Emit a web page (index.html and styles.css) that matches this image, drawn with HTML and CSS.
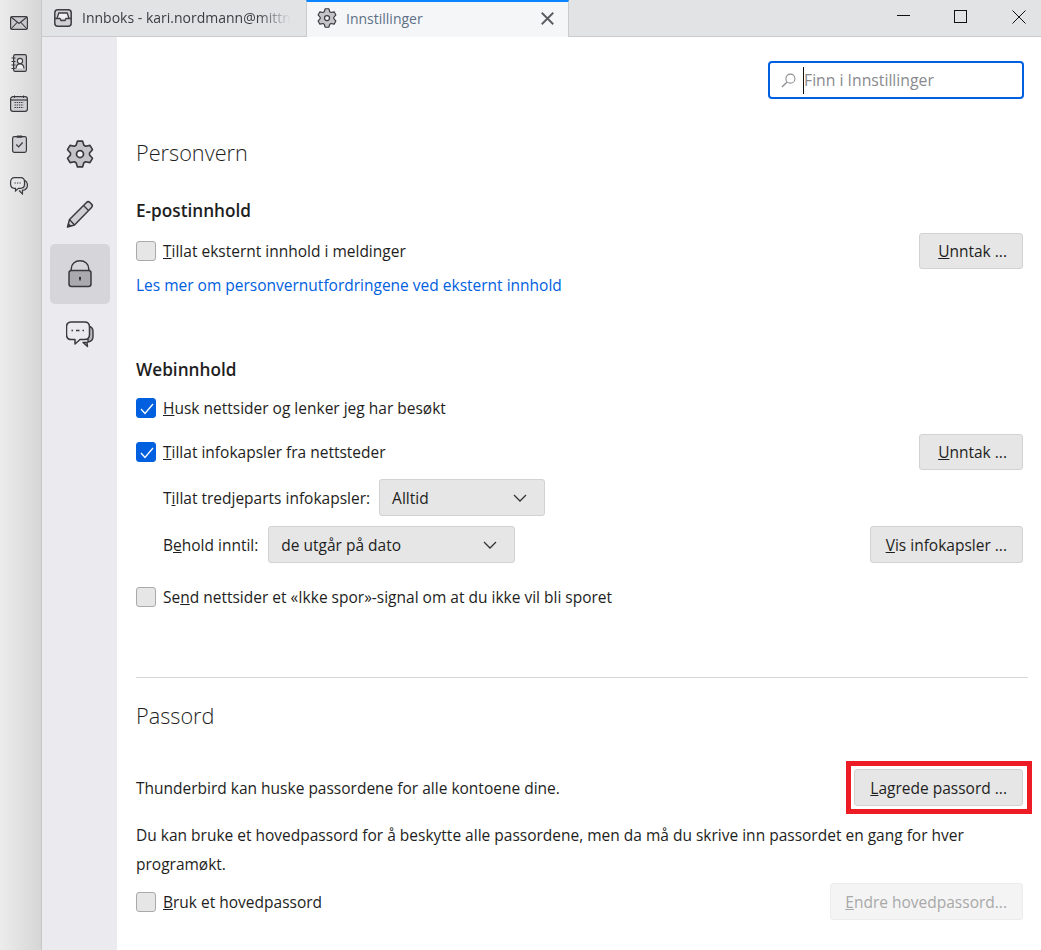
FILE: index.html
```html
<!DOCTYPE html>
<html lang="nb">
<head>
<meta charset="utf-8">
<title>Innstillinger</title>
<link rel="stylesheet" href="styles.css">
</head>
<body>
<div class="app">
  <aside class="spaces">
    <svg class="space-icon i1" viewBox="0 0 18 14"><rect x="0.6" y="0.6" width="16.8" height="12.8" rx="1.5" fill="#c9c9cc" stroke="#3a3a3e" stroke-width="1.2"/><path d="M1 1l8 6.5L17 1M1 13l6-6.5M17 13l-6-6.5" fill="none" stroke="#3a3a3e" stroke-width="1.1"/></svg>
    <svg class="space-icon i2" viewBox="0 0 16 18"><rect x="2.6" y="0.6" width="12.8" height="16.8" rx="1.6" fill="#c9c9cc" stroke="#3a3a3e" stroke-width="1.2"/><path d="M0.5 4h4M0.5 7.5h4M0.5 11h4M0.5 14.5h4" stroke="#3a3a3e" stroke-width="1.2"/><circle cx="9" cy="7" r="2.6" fill="#eee" stroke="#3a3a3e" stroke-width="1.1"/><path d="M5 14.5c.3-3 1.8-4.6 4-4.6s3.700 1.600 4 4.600" fill="#eee" stroke="#3a3a3e" stroke-width="1.1"/></svg>
    <svg class="space-icon i3" viewBox="0 0 18 17"><rect x="0.6" y="1.600" width="16.800" height="14.800" rx="2.400" fill="#d2d2d5" stroke="#3a3a3e" stroke-width="1.200"/><path d="M1 5h16" stroke="#3a3a3e" stroke-width="1.200"/><path d="M4.500 0.500v2.500M13.500 0.500v2.500" stroke="#3a3a3e" stroke-width="1"/><path d="M4.500 7.500h9M4.500 10h9M4.500 12.500h9" stroke="#3a3a3e" stroke-width="1.200" stroke-dasharray="1.400 0.800"/></svg>
    <svg class="space-icon i4" viewBox="0 0 15 18"><rect x="0.600" y="1.600" width="13.800" height="15.800" rx="1.800" fill="#d2d2d5" stroke="#3a3a3e" stroke-width="1.200"/><rect x="4.500" y="0.600" width="6" height="2.200" rx="1" fill="#3a3a3e"/><path d="M4.300 9.500l2.300 2.300 4-4.300" fill="none" stroke="#3a3a3e" stroke-width="1.200"/></svg>
    <svg class="space-icon i5" viewBox="0 0 18 18"><path d="M12.500 12.500v4.500l-3.500-3.500" fill="#c9c9cc" stroke="#3a3a3e" stroke-width="1.100"/><path d="M15 3.500c1.600 1 2.500 2.500 2.500 4.500 0 3-1.800 5-5 5.500" fill="#c9c9cc" stroke="#3a3a3e" stroke-width="1.100"/><path d="M4.500 0.700h6c2.400 0 4 1.700 4 4v2.600c0 2.300-1.600 4-4 4H8.500L5.500 14v-2.700h-1c-2.400 0-3.900-1.700-3.900-4V4.700c0-2.300 1.500-4 3.900-4z" fill="#e6e6e8" stroke="#3a3a3e" stroke-width="1.200"/><path d="M4.500 6h1.300M7 6h1.300M9.500 6h1.300" stroke="#3a3a3e" stroke-width="1.200"/></svg>
  </aside>
  <div class="window">
    <header class="tabbar">
      <div class="tab">
        <svg class="tab-icon" viewBox="0 0 18 18"><rect x="0.800" y="0.800" width="16.400" height="16.400" rx="3" fill="#d0d0d4" stroke="#3d3d42" stroke-width="1.500"/><path d="M3 9.500l1.800-5.500h8.400L15 9.500" fill="#f2f2f4" stroke="#3d3d42" stroke-width="1.300"/><path d="M1 9.500h5l1 2h4l1-2h5" fill="none" stroke="#3d3d42" stroke-width="1.300"/></svg>
        <span class="tab-title fade">Innboks - kari.nordmann@mittn</span>
      </div>
      <div class="tab active">
        <svg class="tab-icon" viewBox="0 0 24 24"><use href="#gear"/></svg>
        <span class="tab-title blue">Innstillinger</span>
        <svg class="tab-close" viewBox="0 0 12 12"><path d="M0.700 0.700l10.600 10.600M11.300 0.700L0.700 11.300" stroke="#5a5b60" stroke-width="1.700"/></svg>
      </div>
      <div class="win-controls">
        <svg class="win-btn" viewBox="0 0 14 14"><path d="M1 5.500h13" stroke="#111" stroke-width="1"/></svg>
        <svg class="win-btn" viewBox="0 0 14 14"><rect x="0.500" y="0.500" width="12" height="12" fill="none" stroke="#111"/></svg>
        <svg class="win-btn" viewBox="0 0 14 14"><path d="M0.500 0.500l13 13M13.500 0.500l-13 13" stroke="#111" stroke-width="1"/></svg>
      </div>
    </header>
    <div class="body">
      <nav class="nav">
        <a class="nav-item"><svg class="nav-icon" viewBox="0 0 24 24"><use href="#gear"/></svg></a>
        <a class="nav-item"><svg class="nav-icon" viewBox="0 0 28 28"><path d="M1.500 27l2-7.500L20.500 2.500c1-1 2.400-1 3.400 0l1.600 1.600c1 1 1 2.400 0 3.400L8.500 25z" fill="#d0d0d4" stroke="#3a3a3e" stroke-width="1.500" stroke-linejoin="round"/><path d="M1.500 27l1-3.900 2.900 2.900z" fill="#3a3a3e"/><path d="M3.500 19.500l5 5.500M17.500 5.500l5 5" stroke="#3a3a3e" stroke-width="1.300"/></svg></a>
        <a class="nav-item selected"><svg class="nav-icon" viewBox="0 0 28 28"><path d="M5.200 11V9C5.200 4 9 .8 14 .8S22.800 4 22.800 9v2" fill="none" stroke="#3a3a3e" stroke-width="1.500"/><rect x="3" y="10.500" width="22" height="16" rx="2.500" fill="#a9a9ae" stroke="#3a3a3e" stroke-width="1.500"/><rect x="13.300" y="17.500" width="1.400" height="3" fill="#222"/><circle cx="14" cy="17.800" r="1" fill="#222"/></svg></a>
        <a class="nav-item"><svg class="nav-icon" viewBox="0 0 28 28"><path d="M21 22.500l.5 4-4.500-4zM22 6c3 .5 5 2.500 5 5.500v5c0 3-1.800 5-5 5.500z" fill="#b9b9bd" stroke="#3a3a3e" stroke-width="1.400" stroke-linejoin="round"/><path d="M5.500 2h13c3 0 5 2 5 5v7.500c0 3-2 5-5 5H14l-5 4.500v-4.500H5.500c-3 0-5-2-5-5V7c0-3 2-5 5-5z" fill="#ebebef" stroke="#3a3a3e" stroke-width="1.500" stroke-linejoin="round"/><path d="M5.500 10.500h1.500M10 10.500h3.500M16.500 10.500h1.500" stroke="#3a3a3e" stroke-width="1.300"/></svg></a>
      </nav>
      <main class="main">
        <div class="search-row">
          <div class="search">
            <svg class="search-icon" viewBox="0 0 16 16"><circle cx="10" cy="6" r="4.800" fill="none" stroke="#8f8f94" stroke-width="1.200"/><path d="M6.500 9.500L1 15" stroke="#8f8f94" stroke-width="1.500"/></svg>
            <span class="caret"></span>
            <span class="placeholder">Finn i Innstillinger</span>
          </div>
        </div>

        <h1 class="page-title">Personvern</h1>
        <h2 class="group-title first">E-postinnhold</h2>
        <div class="row r-email">
          <label class="check"><span class="box"></span><span><u>T</u>illat eksternt innhold i meldinger</span></label>
          <button class="btn w-unntak"><u>U</u>nntak ...</button>
        </div>
        <a class="link">Les mer om personvernutfordringene ved eksternt innhold</a>

        <h2 class="group-title web">Webinnhold</h2>
        <div class="row r-husk">
          <label class="check"><span class="box on"><svg viewBox="0 0 18 18"><path d="M4 10l4 4.500L16 5" fill="none" stroke="#fff" stroke-width="1.300"/></svg></span><span><u>H</u>usk nettsider og lenker jeg har besøkt</span></label>
        </div>
        <div class="row r-cookies">
          <label class="check"><span class="box on"><svg viewBox="0 0 18 18"><path d="M4 10l4 4.500L16 5" fill="none" stroke="#fff" stroke-width="1.300"/></svg></span><span><u>T</u>illat infokapsler fra nettsteder</span></label>
          <button class="btn w-unntak"><u>U</u>nntak ...</button>
        </div>
        <div class="row r-third">
          <div class="field indent"><span>T<u>i</u>llat tredjeparts infokapsler:</span>
            <div class="select s-third"><span>Alltid</span><svg class="chev" viewBox="0 0 14 8"><path d="M1 1l6 6 6-6" fill="none" stroke="#333" stroke-width="1.300"/></svg></div>
          </div>
        </div>
        <div class="row r-keep">
          <div class="field indent"><span>B<u>e</u>hold inntil:</span>
            <div class="select s-keep"><span>de utgår på dato</span><svg class="chev" viewBox="0 0 14 8"><path d="M1 1l6 6 6-6" fill="none" stroke="#333" stroke-width="1.300"/></svg></div>
          </div>
          <button class="btn"><u>V</u>is infokapsler ...</button>
        </div>
        <div class="row r-track">
          <label class="check"><span class="box"></span><span>Se<u>n</u>d nettsider et «Ikke spor»-signal om at du ikke vil bli sporet</span></label>
        </div>

        <hr class="rule">
        <h1 class="page-title pw">Passord</h1>
        <div class="row r-saved">
          <span>Thunderbird kan huske passordene for alle kontoene dine.</span>
          <button class="btn marked"><u>L</u>agrede passord ...</button>
        </div>
        <p class="para">Du kan bruke et hovedpassord for å beskytte alle passordene, men da må du skrive inn passordet en gang for hver programøkt.</p>
        <div class="row r-master">
          <label class="check"><span class="box"></span><span><u>B</u>ruk et hovedpassord</span></label>
          <button class="btn disabled" disabled><u>E</u>ndre hovedpassord...</button>
        </div>
      </main>
    </div>
  </div>
</div>
<svg class="defs" width="0" height="0">
  <defs>
    <symbol id="gear" viewBox="0 0 24 24">
      <path d="M9.840 .91H14.160L15.340 4.510L16.820 5.370L20.530 4.590L22.690 8.320L20.160 11.140V12.860L22.690 15.680L20.530 19.410L16.820 18.630L15.340 19.490L14.160 23.090H9.840L8.660 19.490L7.180 18.630L3.470 19.410L1.310 15.680L3.840 12.860V11.140L1.310 8.320L3.470 4.590L7.180 5.370L8.660 4.510Z" fill="#c4c4c8" stroke="#3a3a3e" stroke-width="1.400" stroke-linejoin="round"/>
      <circle cx="12" cy="12" r="3" fill="#f5f5f7" stroke="#3a3a3e" stroke-width="1.500"/>
    </symbol>
  </defs>
</svg>
</body>
</html>
```
FILE: styles.css
```css
* { box-sizing: border-box; }
html, body { margin: 0; padding: 0; height: 100%; overflow: hidden; }
body { font-family: "Open Sans", "Noto Sans", sans-serif; font-size: 15.5px; color: #1e1e22; background: #fff; }
.defs { position: absolute; }
.app { display: flex; width: 1041px; height: 950px; }

.spaces { width: 42px; flex: none; background: linear-gradient(90deg, #ececec, #d6d6d6); border-right: 1px solid #c8c8c8; display: flex; flex-direction: column; align-items: center; padding: 16px 3px 0 0; }
.space-icon { display: block; }
.i1 { width: 18px; height: 14px; }
.i2 { width: 16px; height: 18px; margin-top: 24px; }
.i3 { width: 18px; height: 17px; margin-top: 23px; }
.i4 { width: 15px; height: 18px; margin-top: 23px; }
.i5 { width: 18px; height: 18px; margin-top: 24px; }

.window { flex: 1; display: flex; flex-direction: column; min-width: 0; }
.tabbar { height: 37px; flex: none; display: flex; background: #e2e3e5; border-bottom: 1px solid #cbcbcb; }
.tab { display: flex; align-items: center; height: 37px; width: 264px; padding: 0 0 2px 12px; flex: none; font-size: 14px; color: #3c3c42; }
.tab-icon { width: 18px; height: 18px; flex: none; }
.tab-title { margin-left: 10px; white-space: nowrap; }
.fade { -webkit-mask-image: linear-gradient(90deg, #000 84%, transparent); mask-image: linear-gradient(90deg, #000 84%, transparent); }
.tab.active { width: 263px; background: #f5f6f8; border: 1px solid #cbcbcb; border-top: 2px solid #0a84ff; border-bottom: 0; padding: 0 0 3px 10px; }
.tab.active .tab-icon { width: 20px; height: 20px; }
.tab.active .tab-title { margin-left: 9px; }
.blue { color: #5d7087; flex: 1; }
.tab-close { width: 13px; height: 13px; margin-right: 14px; flex: none; }
.win-controls { margin-left: auto; display: flex; gap: 44px; padding: 10px 15px 0 0; }
.win-btn { width: 14px; height: 14px; display: block; }

.body { flex: 1; display: flex; min-height: 0; }
.nav { width: 75px; flex: none; background: #ebebef; padding: 87px 0 0 8px; }
.nav-item { display: flex; align-items: center; justify-content: center; width: 60px; height: 60px; border-radius: 5px; }
.nav-item.selected { background: #d6d6da; }
.nav-icon { width: 28px; height: 28px; display: block; }

.main { flex: 1; min-width: 0; padding: 0 18px 0 19px; }
.search-row { display: flex; justify-content: flex-end; padding-top: 24px; }
.search { width: 256px; height: 38px; margin-right: -1px; border: 2px solid #0060df; border-radius: 4px; display: flex; align-items: center; padding-left: 11px; }
.search-icon { width: 15px; height: 15px; flex: none; }
.caret { width: 1px; height: 27px; background: #111; margin-left: 7px; flex: none; }
.placeholder { font-size: 15.75px; color: #8a8a8e; }

.page-title { font-size: 21.7px; font-weight: 300; line-height: 36px; margin: 36px 0 0; color: #1e1e22; }
.page-title.pw { margin-top: 20px; }
.group-title { font-size: 17.2px; font-weight: 600; line-height: 24px; margin: 0; }
.group-title.first { margin-top: 28px; }
.group-title.web { margin-top: 61px; }

.row { display: flex; align-items: center; justify-content: space-between; }
.r-email { margin-top: 10px; height: 36px; }
.r-husk { margin-top: 12px; height: 28px; }
.r-cookies { margin-top: 12px; height: 36px; }
.r-third { margin-top: 9px; height: 37px; }
.r-keep { margin-top: 10px; height: 37px; }
.r-track { margin-top: 20px; height: 28px; }
.r-saved { margin-top: 35px; height: 37px; }
.r-master { margin-top: 4px; height: 37px; }

.check { display: flex; align-items: center; gap: 7px; }
.box { width: 20px; height: 20px; flex: none; border: 1px solid #aaaaae; border-radius: 3px; background: #e6e6e6; display: block; }
.box.on { background: #0060df; border-color: #0060df; }
.box svg { display: block; width: 18px; height: 18px; }

.btn { font: inherit; color: inherit; height: 36px; padding: 0 15px 0 15px; background: #e6e6e6; border: 1px solid #d2d2d2; border-radius: 3px; position: relative; white-space: nowrap; text-align: right; }
.w-unntak { min-width: 104px; }
.btn.marked::after { content: ""; position: absolute; inset: -9px -10px -9px -9px; border: 5px solid #ed1c24; }
.btn.disabled { background: #f4f4f4; border-color: #ececec; color: #a8a8a8; padding-left: 14px; }
.r-saved .btn, .r-master .btn, .r-keep .btn { height: 37px; }

.link { display: block; color: #0060df; line-height: 24px; margin-top: 4px; }
.indent { padding-left: 27px; }
.field { display: flex; align-items: center; gap: 9px; }
.select { height: 37px; display: flex; align-items: center; justify-content: space-between; background: #e6e6e6; border: 1px solid #d2d2d2; border-radius: 3px; padding: 0 17px 0 12px; }
.s-third { width: 166px; }
.s-keep { width: 247px; margin-left: 1px; }
.chev { width: 14px; height: 8px; display: block; }

.rule { border: 0; border-top: 1px solid #d7d7db; margin: 66px -5px 0 0; }
.para { margin: 0; padding-top: 15px; line-height: 29px; }
```
